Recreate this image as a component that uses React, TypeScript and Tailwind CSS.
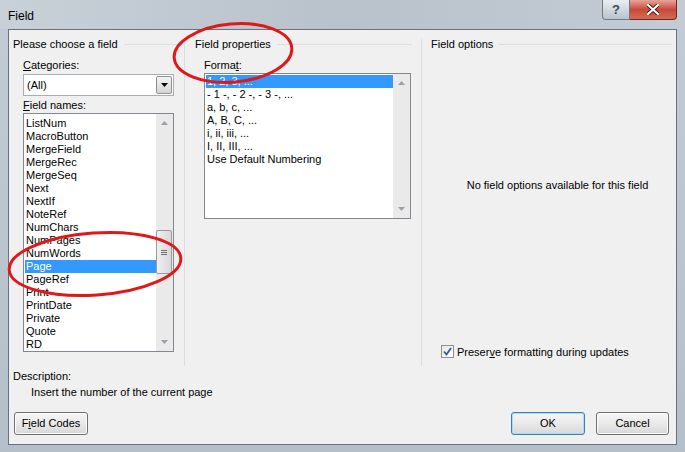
import React from 'react';

const fieldNames = [
  'ListNum', 'MacroButton', 'MergeField', 'MergeRec', 'MergeSeq', 'Next', 'NextIf', 'NoteRef',
  'NumChars', 'NumPages', 'NumWords', 'Page', 'PageRef', 'Print', 'PrintDate', 'Private', 'Quote', 'RD',
];

const formats = ['1, 2, 3, ...', '- 1 -, - 2 -, - 3 -, ...', 'a, b, c, ...', 'A, B, C, ...', 'i, ii, iii, ...', 'I, II, III, ...', 'Use Default Numbering'];

const GroupHeader = ({ title, lineWidth }: { title: string; lineWidth: string }) => (
  <div className="flex items-center h-[15px]">
    <span className="whitespace-nowrap">{title}</span>
    <div className={`ml-[6px] h-px bg-[#d5dfe5] ${lineWidth}`} />
  </div>
);

const Arrow = ({ up }: { up?: boolean }) => (
  <svg width="7" height="4" viewBox="0 0 7 4">
    <path d={up ? 'M0 4 L3.5 0 L7 4 Z' : 'M0 0 L3.5 4 L7 0 Z'} fill="#a0a0a0" />
  </svg>
);

const Scrollbar = ({ thumb }: { thumb?: boolean }) => (
  <div className="w-[17px] h-full bg-[#eaeaea] flex flex-col items-center justify-between py-[7px] relative">
    <Arrow up />
    {thumb && (
      <div className="absolute left-0 top-[116px] w-[16px] h-[44px] border border-[#9a9a9a] rounded-[2px] bg-gradient-to-r from-[#f0f0f0] to-[#d8d8d8] flex items-center justify-center">
        <div className="flex flex-col gap-[1px]">
          <div className="w-[6px] h-px bg-[#6f6f6f]" />
          <div className="w-[6px] h-px bg-[#6f6f6f]" />
          <div className="w-[6px] h-px bg-[#6f6f6f]" />
        </div>
      </div>
    )}
    <Arrow />
  </div>
);

const Button = ({ label, def }: { label: React.ReactNode; def?: boolean }) => (
  <div
    className={`h-[23px] rounded-[3px] border flex items-center justify-center bg-gradient-to-b from-[#f6f6f6] via-[#e9e9e9] to-[#d8d8d8] ${
      def ? 'border-[#3c7fb1] shadow-[inset_0_0_0_1px_#a6dcf5]' : 'border-[#707070] shadow-[inset_0_0_0_1px_#fcfcfc]'
    }`}
  >
    {label}
  </div>
);

export default function App() {
  return (
    <div
      className="relative w-[685px] h-[452px] flex flex-col bg-gradient-to-b from-[#c3ccd5] to-[#b4bfca] text-[11px] text-black overflow-hidden"
      style={{ fontFamily: '"Liberation Sans", Arial, sans-serif' }}
    >
      {/* title bar */}
      <div className="h-[29px] flex justify-between pl-[8px] pr-[8px] bg-gradient-to-r from-[#c8d0d8] via-[#b9c2cb] to-[#c3ccd4]">
        <div className="pt-[7px] text-[12px]">Field</div>
        <div className="flex items-start">
          <div className="w-[28px] h-[20px] rounded-bl-[4px] border border-t-0 border-[#6f7a86] bg-gradient-to-b from-[#e9eef2] to-[#b9c3cc] flex items-center justify-center text-[#3a4a5a] font-bold text-[13px]">
            ?
          </div>
          <div className="w-[47px] h-[20px] rounded-br-[4px] border border-t-0 border-l-0 border-[#6e2a22] bg-gradient-to-b from-[#e8a397] via-[#c7493b] to-[#d36b55] flex items-center justify-center">
            <svg width="12" height="11" viewBox="0 0 12 11">
              <path d="M1 1 L11 10 M11 1 L1 10" stroke="#3a1410" strokeWidth="4" strokeLinecap="square" />
              <path d="M1 1 L11 10 M11 1 L1 10" stroke="#ffffff" strokeWidth="2.2" strokeLinecap="square" />
            </svg>
          </div>
        </div>
      </div>

      {/* client area */}
      <div className="mx-[8px] mb-[7px] flex-1 border border-[#66727f] bg-[#f0f0f0] flex flex-col">
        <div className="flex h-[336px]">
          {/* left column */}
          <div className="w-[175px] pl-[4px] pt-[7px] flex flex-col">
            <GroupHeader title="Please choose a field" lineWidth="w-[56px]" />
            <div className="pl-[10px] mt-[5px]">
              <div className="h-[15px]"><u>C</u>ategories:</div>
              <div className="mt-[2px] w-[151px] h-[22px] bg-white border border-[#abadb3] flex items-center justify-between pl-[3px] pr-px">
                <span>(All)</span>
                <div className="w-[16px] h-[18px] border border-[#8f8f8f] rounded-[2px] bg-gradient-to-b from-[#f3f3f3] to-[#d5d5d5] flex items-center justify-center">
                  <svg width="7" height="4" viewBox="0 0 7 4"><path d="M0 0 L3.5 4 L7 0 Z" fill="#000" /></svg>
                </div>
              </div>
              <div className="mt-[1px] h-[15px]"><u>F</u>ield names:</div>
              <div className="mt-px w-[151px] h-[239px] bg-white border border-[#828790] flex">
                <div className="flex-1 pt-[3px] pl-px leading-[13px]">
                  {fieldNames.map((n) => (
                    <div key={n} className={`h-[13px] pl-px ${n === 'Page' ? 'bg-[#3399ff] text-white' : ''}`}>{n}</div>
                  ))}
                </div>
                <Scrollbar thumb />
              </div>
            </div>
          </div>

          <div className="w-px mt-[9px] bg-[#d5dfe5]" />

          {/* middle column */}
          <div className="w-[236px] pl-[10px] pt-[7px] flex flex-col">
            <GroupHeader title="Field properties" lineWidth="w-[135px]" />
            <div className="pl-[9px] mt-[5px]">
              <div className="h-[15px]">Forma<u>t</u>:</div>
              <div className="mt-px w-[207px] h-[146px] bg-white border border-[#828790] flex">
                <div className="flex-1 pt-px pl-px leading-[13px]">
                  {formats.map((f, i) => (
                    <div key={f} className={`h-[13px] pl-px ${i === 0 ? 'bg-[#3399ff] text-white' : ''}`}>{f}</div>
                  ))}
                </div>
                <Scrollbar />
              </div>
            </div>
          </div>

          <div className="w-px mt-[9px] bg-[#d5dfe5]" />

          {/* right column */}
          <div className="flex-1 pl-[9px] pt-[7px] pr-[4px] flex flex-col">
            <GroupHeader title="Field options" lineWidth="flex-1" />
            <div className="flex-1 flex items-center justify-center pl-[12px] pb-[26px]">
              No field options available for this field
            </div>
            <div className="flex items-center pl-[10px] pb-[6px]">
              <div className="w-[13px] h-[13px] border border-[#8e8f8f] bg-gradient-to-br from-[#e6e6e6] to-white flex items-center justify-center">
                <svg width="9" height="9" viewBox="0 0 9 9">
                  <path d="M1 4.5 L3.5 7.5 L8 1" stroke="#3d56a0" strokeWidth="1.8" fill="none" />
                </svg>
              </div>
              <span className="ml-[3px]">Preser<u>v</u>e formatting during updates</span>
            </div>
          </div>
        </div>

        {/* description */}
        <div className="pl-[4px] mt-[2px] h-[15px]">Description:</div>
        <div className="pl-[22px] mt-px h-[15px]">Insert the number of the current page</div>

        {/* buttons */}
        <div className="mt-[13px] flex justify-between pl-[5px] pr-[7px]">
          <div className="w-[74px]">
            <Button label={<span>F<u>i</u>eld Codes</span>} />
          </div>
          <div className="flex gap-[11px]">
            <div className="w-[74px]"><Button label="OK" def /></div>
            <div className="w-[73px]"><Button label="Cancel" /></div>
          </div>
        </div>
      </div>

      {/* red annotation ellipses */}
      <svg className="absolute inset-0 pointer-events-none" width="685" height="452" viewBox="0 0 685 452">
        <ellipse cx="233" cy="53" rx="59" ry="29" transform="rotate(-5 233 53)" fill="none" stroke="#e01818" strokeWidth="3" />
        <ellipse cx="95" cy="264" rx="86" ry="31" transform="rotate(-4 95 264)" fill="none" stroke="#e01818" strokeWidth="3" />
      </svg>
    </div>
  );
}
